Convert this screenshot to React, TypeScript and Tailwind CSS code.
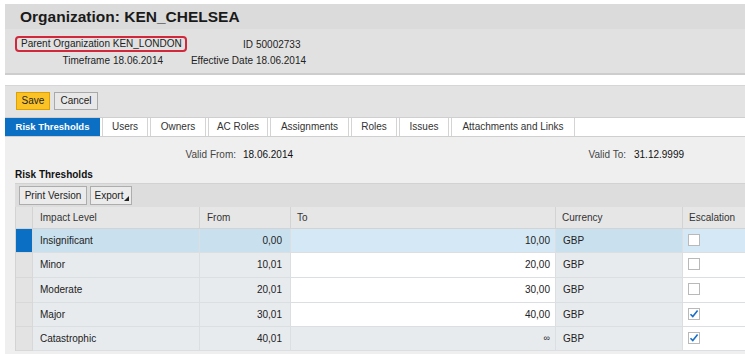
import React from "react";

const tabs = [
  { label: "Risk Thresholds", cls: "w-[95px]", active: true },
  { label: "Users", cls: "w-[46px]", active: false },
  { label: "Owners", cls: "w-[56px]", active: false },
  { label: "AC Roles", cls: "w-[60px]", active: false },
  { label: "Assignments", cls: "w-[79px]", active: false },
  { label: "Roles", cls: "w-[46px]", active: false },
  { label: "Issues", cls: "w-[50px]", active: false },
  { label: "Attachments and Links", cls: "w-[124px]", active: false },
];

type Row = {
  level: string;
  from: string;
  to: string;
  esc: boolean;
  h: string;
  lh: string;
  sel?: boolean;
  toRO?: boolean;
};

const rows: Row[] = [
  { level: "Insignificant", from: "0,00", to: "10,00", esc: false, sel: true, h: "h-[24px]", lh: "leading-[23px]" },
  { level: "Minor", from: "10,01", to: "20,00", esc: false, h: "h-[25px]", lh: "leading-[24px]" },
  { level: "Moderate", from: "20,01", to: "30,00", esc: false, h: "h-[25px]", lh: "leading-[24px]" },
  { level: "Major", from: "30,01", to: "40,00", esc: true, h: "h-[24px]", lh: "leading-[23px]" },
  { level: "Catastrophic", from: "40,01", to: "∞", esc: true, toRO: true, h: "h-[24px]", lh: "leading-[23px]" },
];

function Checkbox({ checked }: { checked: boolean }) {
  return (
    <div className="w-[12px] h-[12px] border border-[#b9b9b9] bg-white flex items-center justify-center">
      {checked && (
        <svg width="10" height="10" viewBox="0 0 10 10">
          <path d="M1.5 5.2 L3.8 7.6 L8.6 1.6" fill="none" stroke="#1b6fc8" strokeWidth="1.6" />
        </svg>
      )}
    </div>
  );
}

export default function App() {
  return (
    <div
      className="w-[745px] h-[354px] overflow-hidden bg-white text-[10px] text-[#222]"
      style={{ fontFamily: '"Liberation Sans", Arial, sans-serif' }}
    >
      {/* Header */}
      <div className="mt-[4px] ml-[5px]">
        <div className="h-[25px] bg-[#dbdbdb] pl-[15px] text-[15.5px] font-bold leading-[25px] text-[#1a1a1a]">
          Organization: KEN_CHELSEA
        </div>
        <div className="h-[46px] bg-[#e1e1e1] border-b-2 border-[#cdcdcd] pt-[7px]">
          <div className="flex h-[16px] items-center">
            <div className="ml-[10px] w-[172px] h-[16px] border-2 border-[#d2283c] rounded-[4px] pl-[4px] leading-[12px]">
              Parent Organization KEN_LONDON
            </div>
            <span className="w-[66px] text-right">ID</span>
            <span className="pl-[3px]">50002733</span>
          </div>
          <div className="flex h-[16px] items-center">
            <span className="w-[105px] text-right">Timeframe</span>
            <span className="w-[53px] pl-[3px]">18.06.2014</span>
            <span className="w-[90px] text-right">Effective Date</span>
            <span className="pl-[3px]">18.06.2014</span>
          </div>
        </div>
      </div>

      {/* Toolbar */}
      <div className="mt-[10px] ml-[5px] h-[32px] bg-[#e3e3e3] border-t border-[#d6d6d6] pt-[6px] pl-[11px] flex gap-[4px]">
        <button className="w-[34px] h-[18px] bg-[#fac227] border border-[#dea200] text-[#222] text-[10px] leading-[16px]">
          Save
        </button>
        <button className="w-[44px] h-[18px] bg-[#e8e8e8] border border-[#a9a9a9] text-[#222] text-[10px] leading-[16px]">
          Cancel
        </button>
      </div>

      {/* Tabs */}
      <div className="ml-[5px] h-[20px] bg-white border-t border-b border-[#cfcfcf] flex gap-[2px]">
        {tabs.map((t) =>
          t.active ? (
            <div
              key={t.label}
              className={`${t.cls} h-[18px] bg-[#0b70c4] text-white font-bold text-[9.5px] leading-[18px] text-center`}
            >
              {t.label}
            </div>
          ) : (
            <div
              key={t.label}
              className={`${t.cls} h-[18px] bg-white border-x border-[#d4d4d4] text-[#333] leading-[18px] text-center`}
            >
              {t.label}
            </div>
          )
        )}
      </div>

      {/* Content */}
      <div className="ml-[5px] h-[217px] bg-[#efefef] pt-[10px]">
        <div className="flex h-[14px] items-center">
          <span className="w-[231px] text-right text-[#444]">Valid From:</span>
          <span className="w-[50px] ml-[7px] text-[#111]">18.06.2014</span>
          <span className="w-[333px] text-right text-[#444]">Valid To:</span>
          <span className="ml-[8px] text-[#111]">31.12.9999</span>
        </div>
        <div className="mt-[7px] h-[14px] pl-[10px] font-bold leading-[14px] text-[#111]">Risk Thresholds</div>

        {/* Table toolbar */}
        <div className="mt-[1px] ml-[10px] h-[24px] bg-[#dddddd] border-t border-[#d2d2d2] pt-[2px] pl-[4px] flex gap-[3px]">
          <button className="w-[68px] h-[19px] bg-[#ebebeb] border border-[#adadad] text-[#222] text-[10px] leading-[17px]">
            Print Version
          </button>
          <button className="relative w-[42px] h-[19px] bg-[#ebebeb] border border-[#adadad] text-[#222] text-[10px] leading-[17px] pr-[4px]">
            Export
            <svg className="absolute right-[2px] bottom-[3px]" width="5" height="5" viewBox="0 0 5 5">
              <path d="M5 0 L5 5 L0 5 Z" fill="#222" />
            </svg>
          </button>
        </div>

        {/* Table */}
        <div className="ml-[10px] grid grid-cols-[17px_167px_91px_265px_127px_100px] border-l border-[#d3d3d3]">
          {/* header */}
          <div className="h-[22px] bg-[#e4e4e4] border-r border-b border-[#d3d3d3]" />
          <div className="h-[22px] bg-[#e6e6e6] border-r border-b border-[#d3d3d3] pl-[7px] leading-[21px] text-[#333]">
            Impact Level
          </div>
          <div className="h-[22px] bg-[#e6e6e6] border-r border-b border-[#d3d3d3] pl-[7px] leading-[21px] text-[#333]">
            From
          </div>
          <div className="h-[22px] bg-[#e6e6e6] border-r border-b border-[#d3d3d3] pl-[6px] leading-[21px] text-[#333]">
            To
          </div>
          <div className="h-[22px] bg-[#e6e6e6] border-r border-b border-[#d3d3d3] pl-[6px] leading-[21px] text-[#333]">
            Currency
          </div>
          <div className="h-[22px] bg-[#e6e6e6] border-b border-[#d3d3d3] pl-[6px] leading-[21px] text-[#333]">
            Escalation
          </div>

          {rows.map((r) => {
            const ro = r.sel ? "bg-[#c9e1ee]" : "bg-[#e8ebee]";
            const ed = r.sel ? "bg-[#d4e9f5]" : "bg-white";
            const toBg = r.toRO ? ro : ed;
            return (
              <React.Fragment key={r.level}>
                <div
                  className={`${r.h} border-r border-b border-[#d8d8d8] ${
                    r.sel ? "bg-[#0b70c4]" : "bg-[#e3e3e3]"
                  }`}
                />
                <div className={`${r.h} ${r.lh} ${ro} border-r border-b border-[#dcdfe2] pl-[7px]`}>
                  {r.level}
                </div>
                <div className={`${r.h} ${r.lh} ${ro} border-r border-b border-[#dcdfe2] pr-[8px] text-right`}>
                  {r.from}
                </div>
                <div
                  className={`${r.h} ${r.lh} ${toBg} border-r border-b border-[#dcdfe2] pr-[5px] text-right ${
                    r.toRO ? "text-[9px]" : ""
                  }`}
                >
                  {r.to}
                </div>
                <div className={`${r.h} ${r.lh} ${ro} border-r border-b border-[#dcdfe2] pl-[7px]`}>
                  GBP
                </div>
                <div className={`${r.h} ${ed} border-b border-[#dcdfe2] pl-[5px] pt-[5px]`}>
                  <Checkbox checked={r.esc} />
                </div>
              </React.Fragment>
            );
          })}
        </div>
      </div>
    </div>
  );
}
